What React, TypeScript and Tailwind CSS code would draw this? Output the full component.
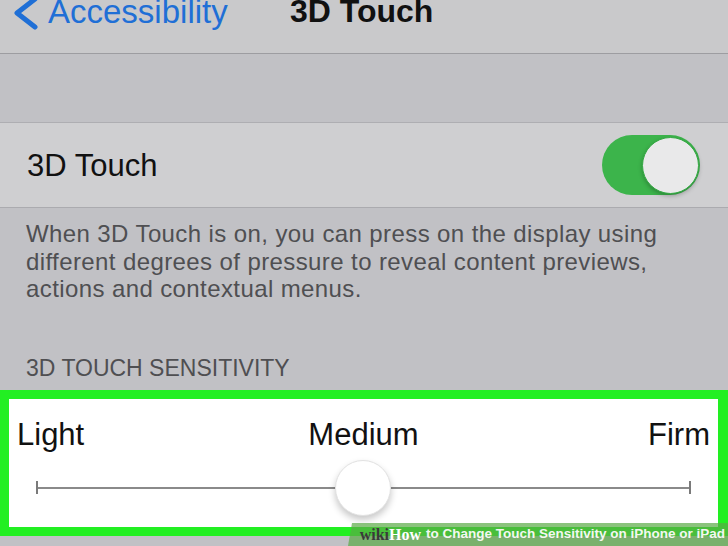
import React from 'react';

const sans = { fontFamily: '"Liberation Sans", Arial, sans-serif' };

function Toggle() {
  return (
    <div className="flex h-[60px] w-[98px] items-center justify-end rounded-full bg-[#3cb44b] p-[1px]">
      <div className="h-[57px] w-[57px] rounded-full border border-[#35a944] bg-[#e9e9ea] shadow-[0_2px_4px_rgba(0,0,0,0.25)]" />
    </div>
  );
}

function SensitivitySlider() {
  return (
    <div className="relative mx-[27px] mt-[10px] flex h-[56px] items-center">
      <div className="h-[13px] w-[2px] bg-[#7a7a7a]" />
      <div className="h-[2px] flex-1 bg-[#8a8a8a]" />
      <div className="h-[13px] w-[2px] bg-[#7a7a7a]" />
      <div className="absolute left-[299px] top-0 h-[56px] w-[56px] rounded-full border border-[#e2e2e2] bg-white shadow-[0_4px_7px_rgba(0,0,0,0.22)]" />
    </div>
  );
}

export default function App() {
  return (
    <div className="relative h-[546px] w-[728px] overflow-hidden bg-[#c1c1c5]" style={sans}>
      {/* nav bar */}
      <div className="relative h-[54px] border-b border-[#9d9da1] bg-[#c9c9cb]">
        <svg className="absolute left-[11px] top-[-3px]" width="30" height="35" viewBox="0 0 30 35">
          <path d="M24 2 L6 16 L24 30" fill="none" stroke="#1f6fd6" strokeWidth="5" strokeLinecap="round" strokeLinejoin="round" />
        </svg>
        <div className="absolute left-[48px] top-[-5px] text-[33px] leading-[33px] text-[#1f6fd6]">Accessibility</div>
        <div className="absolute left-[290px] top-[-5px] text-[32px] font-bold leading-[32px] text-[#111]">3D Touch</div>
      </div>

      {/* spacer */}
      <div className="h-[69px] border-b border-[#aeaeb2] bg-[#c1c1c5]" />

      {/* 3D Touch row */}
      <div className="flex h-[85px] items-center justify-between border-b border-[#ababaf] bg-[#cfcfd1] pl-[27px] pr-[28px]">
        <span className="text-[31px] leading-[31px] text-[#111]">3D Touch</span>
        <Toggle />
      </div>

      {/* footer text */}
      <div className="px-[26px] pt-[12px]">
        <p className="whitespace-nowrap text-[24px] leading-[27.5px] tracking-[0.4px] text-[#4f4f52]">
          When 3D Touch is on, you can press on the display using
          <br />
          different degrees of pressure to reveal content previews,
          <br />
          actions and contextual menus.
        </p>
        <div className="mt-[51px] text-[23px] leading-[28px] text-[#4f4f52]">3D TOUCH SENSITIVITY</div>
      </div>

      {/* highlighted slider box */}
      <div className="mt-[8px] border-[9px] border-r-[10px] border-[#22ef22]">
        <div className="h-[128px] bg-white pt-[20px]">
          <div className="grid grid-cols-3 px-[8px] text-[31px] leading-[31px] text-[#111]">
            <span>Light</span>
            <span className="text-center">Medium</span>
            <span className="text-right">Firm</span>
          </div>
          <SensitivitySlider />
        </div>
      </div>

      {/* watermark */}
      <div className="absolute bottom-0 right-0 flex h-[23px] w-[380px] items-center justify-end bg-[rgba(90,170,70,0.7)] pr-[3px] [clip-path:polygon(4px_0,100%_0,100%_100%,0_100%)]">
        <span className="text-[16px] font-bold text-[#3a3a3a]" style={{ fontFamily: '"Liberation Serif", serif' }}>
          wiki
        </span>
        <span className="mr-[5px] text-[16px] font-bold text-white" style={{ fontFamily: '"Liberation Serif", serif' }}>
          How
        </span>
        <span className="text-[13.5px] font-bold text-[#f3f7f1]">to Change Touch Sensitivity on iPhone or iPad</span>
      </div>
    </div>
  );
}
